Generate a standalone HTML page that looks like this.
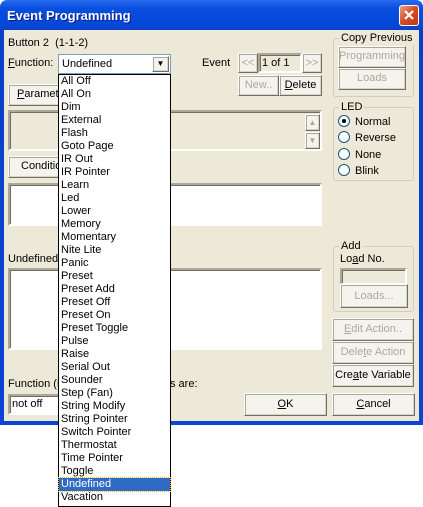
<!DOCTYPE html>
<html><head><meta charset="utf-8"><style>
*{margin:0;padding:0;box-sizing:border-box}
body{width:423px;height:507px;background:#fff;position:relative;overflow:hidden;font-family:"Liberation Sans",sans-serif;font-size:11px;color:#000}
.a{position:absolute}
.win{left:0;top:0;width:423px;height:425px;border-radius:7px 7px 0 0;background:linear-gradient(#2a6cf0,#0a4ee0 8px,#0548d8 25px,#0a3fc8 30px,#0a45d8 100%)}
.body{left:4px;top:30px;width:415px;height:391px;background:#ece9d8}
.t{color:#000;white-space:nowrap;line-height:13px}
.btn{position:absolute;background:#f4f3ee;border:1px solid #fff;border-right-color:#716f64;border-bottom-color:#716f64;box-shadow:1px 1px 0 #aca899 inset, -1px -1px 0 #d8d4c8 inset;text-align:center;line-height:18px;white-space:nowrap}
.dis{color:#aca899}
.sunk{position:absolute;background:#fff;border:1px solid #7f9db9}
.sunk2{position:absolute;border:2px solid;border-color:#aca899 #fff #fff #aca899;box-shadow:inset 1px 1px 0 #716f64}
.grp{position:absolute;border:1px solid #d0d0bf;border-radius:3px}
.grp span{position:absolute;top:-7px;left:5px;background:#ece9d8;padding:0 2px;line-height:13px;white-space:nowrap}
.rad{position:absolute;width:12px;height:12px;border-radius:50%;background:#fff;border:1px solid #1c5180}
.list{left:58px;top:74px;width:113px;height:433px;background:#fff;border:1px solid #000}
.list div{height:13px;line-height:13px;padding-left:2px;font-size:11px}
.sel{background:#316ac5;color:#fff;outline:1px dotted #f0c000}
u{text-decoration:underline}
</style></head><body>
<div class="a win"></div>
<div class="a t" style="left:7px;top:9px;color:#fff;font-weight:bold;font-size:13px;text-shadow:1px 1px #0a1e80">Event Programming</div>
<div class="a" style="left:399px;top:5px;width:20px;height:21px;border:1px solid #fff;border-radius:3px;background:linear-gradient(135deg,#e8a08a,#d84a20 50%,#c03810)"><svg width="18" height="19" style="position:absolute;left:0;top:0"><path d="M5 5L13 13M13 5L5 13" stroke="#fff" stroke-width="2.2"/></svg></div>
<div class="a body"></div>

<div class="a t" style="left:8px;top:37px">Button 2&nbsp; (1-1-2)</div>
<div class="a t" style="left:8px;top:57px"><u>F</u>unction:</div>
<div class="sunk" style="left:58px;top:54px;width:113px;height:20px;border-color:#7f9db9"></div>
<div class="a t" style="left:62px;top:58px">Undefined</div>
<div class="btn" style="left:152px;top:56px;width:17px;height:16px;line-height:14px;font-size:8px">▼</div>

<div class="a t" style="left:202px;top:57px">Event</div>
<div class="btn dis" style="left:238px;top:53px;width:20px;height:20px">&lt;&lt;</div>
<div class="sunk2" style="left:258px;top:53px;width:44px;height:20px;background:#ece9d8"></div>
<div class="a t" style="left:262px;top:57px">1 of 1</div>
<div class="btn dis" style="left:302px;top:53px;width:20px;height:20px">&gt;&gt;</div>
<div class="btn dis" style="left:238px;top:75px;width:41px;height:21px">New..</div>
<div class="btn" style="left:279px;top:75px;width:43px;height:21px"><u>D</u>elete</div>

<div class="grp" style="left:333px;top:38px;width:81px;height:59px"><span>Copy Previous</span></div>
<div class="btn dis" style="left:338px;top:46px;width:68px;height:22px">Programming</div>
<div class="btn dis" style="left:338px;top:68px;width:68px;height:22px">Loads</div>

<div class="grp" style="left:333px;top:107px;width:81px;height:74px"><span>LED</span></div>
<div class="rad" style="left:338px;top:115px"><div style="position:absolute;left:3px;top:3px;width:4px;height:4px;background:#000;border-radius:50%"></div></div>
<div class="a t" style="left:355px;top:116px">Normal</div>
<div class="rad" style="left:338px;top:131px"></div><div class="a t" style="left:355px;top:132px">Reverse</div>
<div class="rad" style="left:338px;top:148px"></div><div class="a t" style="left:355px;top:149px">None</div>
<div class="rad" style="left:338px;top:164px"></div><div class="a t" style="left:355px;top:165px">Blink</div>

<div class="btn" style="left:8px;top:84px;width:60px;height:22px;text-align:left;padding-left:8px"><u>P</u>arameters</div>
<div class="sunk2" style="left:8px;top:110px;width:314px;height:41px"></div>
<div class="btn dis" style="left:305px;top:114px;width:15px;height:17px;font-size:8px;line-height:15px">▲</div>
<div class="btn dis" style="left:305px;top:132px;width:15px;height:17px;font-size:8px;line-height:15px">▼</div>

<div class="btn" style="left:8px;top:156px;width:60px;height:22px;text-align:left;padding-left:12px">Conditions</div>
<div class="sunk2" style="left:8px;top:183px;width:314px;height:43px;background:#fff"></div>

<div class="a t" style="left:8px;top:253px">Undefined</div>
<div class="sunk2" style="left:8px;top:268px;width:314px;height:82px;background:#fff"></div>

<div class="grp" style="left:333px;top:246px;width:81px;height:66px"><span>Add</span></div>
<div class="a t" style="left:340px;top:253px">Lo<u>a</u>d No.</div>
<div class="sunk2" style="left:340px;top:268px;width:67px;height:17px"></div>
<div class="btn dis" style="left:340px;top:284px;width:68px;height:24px;line-height:22px">Loads...</div>

<div class="btn dis" style="left:332px;top:318px;width:82px;height:23px;line-height:21px"><u>E</u>dit Action..</div>
<div class="btn dis" style="left:332px;top:341px;width:82px;height:23px;line-height:21px">Dele<u>t</u>e Action</div>
<div class="btn" style="left:332px;top:364px;width:82px;height:23px;line-height:21px">Cre<u>a</u>te Variable</div>

<div class="a t" style="left:8px;top:378px">Function (Load Status is are:</div>
<div class="a t" style="left:170px;top:378px">s are:</div>
<div class="sunk2" style="left:8px;top:394px;width:60px;height:21px;background:#fff"></div>
<div class="a t" style="left:12px;top:398px">not off</div>
<div class="btn" style="left:244px;top:393px;width:83px;height:23px;line-height:21px"><u>O</u>K</div>
<div class="btn" style="left:332px;top:393px;width:83px;height:23px;line-height:21px"><u>C</u>ancel</div>

<div class="a list">
<div>All Off</div><div>All On</div><div>Dim</div><div>External</div><div>Flash</div><div>Goto Page</div><div>IR Out</div><div>IR Pointer</div><div>Learn</div><div>Led</div><div>Lower</div><div>Memory</div><div>Momentary</div><div>Nite Lite</div><div>Panic</div><div>Preset</div><div>Preset Add</div><div>Preset Off</div><div>Preset On</div><div>Preset Toggle</div><div>Pulse</div><div>Raise</div><div>Serial Out</div><div>Sounder</div><div>Step (Fan)</div><div>String Modify</div><div>String Pointer</div><div>Switch Pointer</div><div>Thermostat</div><div>Time Pointer</div><div>Toggle</div><div class="sel">Undefined</div><div>Vacation</div>
</div>
</body></html>
